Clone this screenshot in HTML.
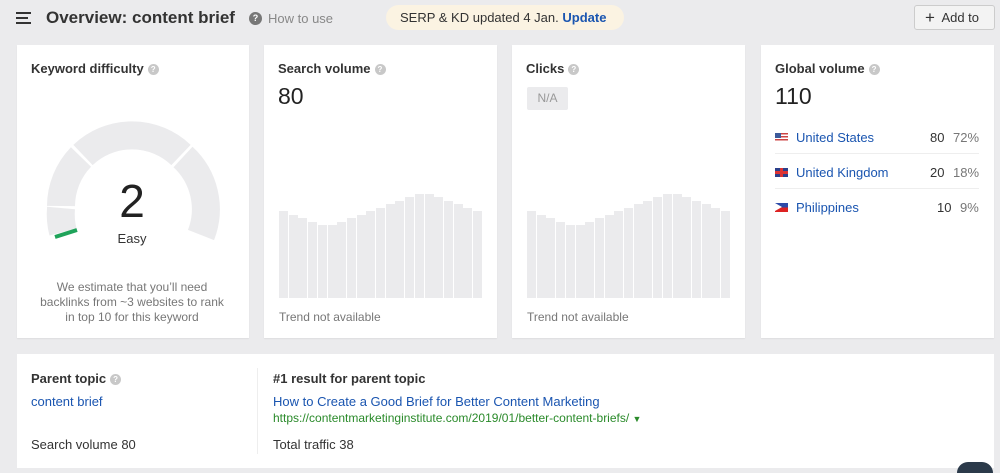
<!DOCTYPE html>
<html style="overflow:hidden;height:473px"><head><style>
*{margin:0;padding:0;box-sizing:border-box}
body{width:1000px;height:473px;background:#ebebed;font-family:"Liberation Sans",Arial,sans-serif;position:relative;overflow:hidden;color:#333}
.abs{position:absolute}
.card{position:absolute;background:#fff;top:45px;height:293px;box-shadow:0 1px 1px rgba(0,0,0,.06)}
.t{position:absolute;left:14px;top:16px;font-size:13px;font-weight:bold;color:#333}
.q{display:inline-block;width:11px;height:11px;border-radius:50%;background:#c8c8c8;color:#fff;font-size:8px;text-align:center;line-height:11px;vertical-align:1px;margin-left:4px}
.big{position:absolute;left:14px;top:38px;font-size:23px;color:#222}
.bars{position:absolute;left:15px;top:147px;width:203px;height:106px}
.bars div{position:absolute;bottom:0;width:9px;background:#ebebed}
.tna{position:absolute;left:15px;top:265px;font-size:12px;color:#777}
a{color:#1a55b0;text-decoration:none}
.row{position:absolute;left:14px;width:204px;height:24px;font-size:13px;border-bottom:1px solid #eee}
.row span{position:absolute;top:0}
</style></head><body>
<div class="abs" style="left:16px;top:12px;width:15px;height:2px;background:#333"></div>
<div class="abs" style="left:16px;top:17px;width:12px;height:2px;background:#333"></div>
<div class="abs" style="left:16px;top:22px;width:15px;height:2px;background:#333"></div>
<div class="abs" style="left:46px;top:8px;font-size:17px;font-weight:bold;color:#333">Overview: content brief</div>
<div class="abs" style="left:249px;top:12px;width:13px;height:13px;border-radius:50%;background:#777;color:#fff;font-size:9px;font-weight:bold;text-align:center;line-height:13px">?</div>
<div class="abs" style="left:268px;top:11px;font-size:13px;color:#888">How to use</div>
<div class="abs" style="left:386px;top:5px;width:238px;height:25px;border-radius:13px;background:#fbf3e2;font-size:13px;line-height:25px;padding-left:14px;color:#333">SERP &amp; KD updated 4 Jan. <b style="color:#1a55b0">Update</b></div>
<div class="abs" style="left:914px;top:5px;width:81px;height:25px;border:1px solid #ccc;border-radius:3px;background:#f3f3f3;font-size:13px;line-height:23px;padding-left:10px;color:#333"><span style="font-size:17px;vertical-align:-1px">+</span>&nbsp; Add to</div>

<div class="card" style="left:17px;width:232px">
<div class="t">Keyword difficulty<span class="q">?</span></div>
<svg class="abs" style="left:0;top:0" width="232" height="293">
<g fill="none" stroke="#ebebed" stroke-width="28">
<path d="M46 187 A71 71 0 0 1 44 163"/>
<path d="M44 161 A71 71 0 0 1 64 112"/>
<path d="M66 110 A71 71 0 0 1 164 110"/>
<path d="M166 112 A71 71 0 0 1 184 190"/>
</g>
<line x1="38" y1="192" x2="60" y2="185" stroke="#1fa35a" stroke-width="4"/>
<text x="115" y="172" font-size="46" text-anchor="middle" fill="#222" font-family="Liberation Sans">2</text>
<text x="115" y="198" font-size="13" text-anchor="middle" fill="#333" font-family="Liberation Sans">Easy</text>
<text x="115" y="246" font-size="12" text-anchor="middle" fill="#777" font-family="Liberation Sans">We estimate that you’ll need</text>
<text x="115" y="261" font-size="12" text-anchor="middle" fill="#777" font-family="Liberation Sans">backlinks from ~3 websites to rank</text>
<text x="115" y="276" font-size="12" text-anchor="middle" fill="#777" font-family="Liberation Sans">in top 10 for this keyword</text>
</svg>
</div>

<div class="card" style="left:264px;width:233px">
<div class="t">Search volume<span class="q">?</span></div>
<div class="big">80</div>
<div class="bars" id="b1"></div>
<div class="tna">Trend not available</div>
</div>

<div class="card" style="left:512px;width:233px">
<div class="t">Clicks<span class="q">?</span></div>
<div class="abs" style="left:15px;top:42px;width:41px;height:23px;background:#ebebed;color:#999;font-size:12px;text-align:center;line-height:23px;border-radius:2px">N/A</div>
<div class="bars" id="b2"></div>
<div class="tna">Trend not available</div>
</div>

<div class="card" style="left:761px;width:233px">
<div class="t">Global volume<span class="q">?</span></div>
<div class="big">110</div>
<div class="row" style="top:85px"><span style="left:0;top:3px;width:13px;height:9px;background:repeating-linear-gradient(#c44 0 1.5px,#fff 1.5px 3px)"><i style="position:absolute;left:0;top:0;width:6px;height:5px;background:#3c5a9a"></i></span><a style="position:absolute;left:21px;top:0">United States</a><span style="left:155px">80</span><span style="left:178px;color:#777">72%</span></div>
<div class="row" style="top:120px"><span style="left:0;top:3px;width:13px;height:9px;background:#2b3f8a"><i style="position:absolute;left:5px;top:0;width:3px;height:9px;background:#d33"></i><i style="position:absolute;left:0;top:3px;width:13px;height:3px;background:#d33"></i></span><a style="position:absolute;left:21px;top:0">United Kingdom</a><span style="left:155px">20</span><span style="left:178px;color:#777">18%</span></div>
<div class="row" style="top:155px;border:none"><span style="left:0;top:3px;width:13px;height:9px;background:linear-gradient(#2d4aa8 50%,#d22 50%)"><i style="position:absolute;left:0;top:0;width:0;height:0;border-left:7px solid #fff;border-top:4.5px solid transparent;border-bottom:4.5px solid transparent"></i></span><a style="position:absolute;left:21px;top:0">Philippines</a><span style="left:162px">10</span><span style="left:185px;color:#777">9%</span></div>
</div>

<div class="abs" style="left:17px;top:354px;width:977px;height:114px;background:#fff">
<div class="abs" style="left:14px;top:17px;font-size:13px;font-weight:bold;color:#333">Parent topic<span class="q">?</span></div>
<a class="abs" style="left:14px;top:40px;font-size:13px">content brief</a>
<div class="abs" style="left:14px;top:83px;font-size:13px;color:#333">Search volume 80</div>
<div class="abs" style="left:240px;top:14px;width:1px;height:86px;background:#eee"></div>
<div class="abs" style="left:256px;top:17px;font-size:13px;font-weight:bold;color:#333">#1 result for parent topic</div>
<a class="abs" style="left:256px;top:40px;font-size:13px">How to Create a Good Brief for Better Content Marketing</a>
<div class="abs" style="left:256px;top:57px;font-size:12px;color:#2a8a2a">https://contentmarketinginstitute.com/2019/01/better-content-briefs/ <span style="font-size:9px">▼</span></div>
<div class="abs" style="left:256px;top:83px;font-size:13px;color:#333">Total traffic 38</div>
</div>
<div class="abs" style="left:957px;top:462px;width:36px;height:11px;border-radius:18px 18px 0 0;background:#2b3a4a"></div>
<script>
var t=[210,213.7,217,220.7,224,224,220.7,217,213.7,210,206.7,203,199.7,196,192.7,192.7,196,199.7,203,206.7,210];
['b1','b2'].forEach(function(id){var e=document.getElementById(id),h='';t.forEach(function(v,i){h+='<div style="left:'+(i*9.7).toFixed(1)+'px;height:'+(297-v).toFixed(1)+'px"></div>'});e.innerHTML=h;});
</script>
</body></html>
